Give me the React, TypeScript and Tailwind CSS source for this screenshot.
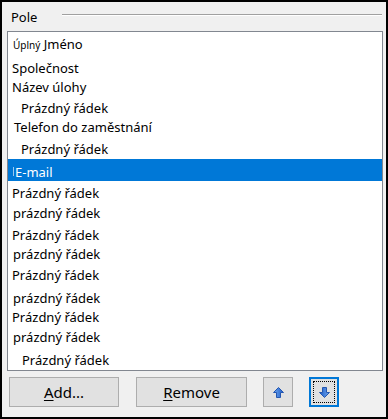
import React from 'react';

type Row = { text: React.ReactNode; h: number; pt: number; pl: number; selected?: boolean };

const rows: Row[] = [
  {
    text: (
      <>
        <span className="text-[10px]">Úplný</span> Jméno
      </>
    ),
    h: 23,
    pt: 5,
    pl: 5,
  },
  { text: 'Společnost', h: 19, pt: 6, pl: 4 },
  { text: 'Název úlohy', h: 21, pt: 6, pl: 4 },
  { text: 'Prázdný řádek', h: 19, pt: 6, pl: 13 },
  { text: 'Telefon do zaměstnání', h: 22, pt: 6, pl: 6 },
  { text: 'Prázdný řádek', h: 23, pt: 6, pl: 13 },
  { text: 'E-mail', h: 22, pt: 6, pl: 7, selected: true },
  { text: 'Prázdný řádek', h: 19, pt: 5, pl: 4 },
  { text: 'prázdný řádek', h: 22, pt: 6, pl: 5 },
  { text: 'Prázdný řádek', h: 19, pt: 6, pl: 4 },
  { text: 'prázdný řádek', h: 21, pt: 6, pl: 5 },
  { text: 'Prázdný řádek', h: 23, pt: 6, pl: 4 },
  { text: 'prázdný řádek', h: 19, pt: 6, pl: 5 },
  { text: 'Prázdný řádek', h: 20, pt: 6, pl: 4 },
  { text: 'prázdný řádek', h: 22, pt: 6, pl: 5 },
  { text: 'Prázdný řádek', h: 24, pt: 7, pl: 14 },
];

const Arrow = ({ down }: { down?: boolean }) => (
  <svg width="11" height="11" viewBox="0 0 11 11" className={down ? 'rotate-180' : ''}>
    <defs>
      <linearGradient id={down ? 'ad' : 'au'} x1="0" y1="0" x2="1" y2="0">
        <stop offset="0" stopColor="#6ea6ee" />
        <stop offset="1" stopColor="#1d5cc8" />
      </linearGradient>
    </defs>
    <path
      d="M5.5 0.5 L10.5 5.5 L7.5 5.5 L7.5 10.5 L3.5 10.5 L3.5 5.5 L0.5 5.5 Z"
      fill={`url(#${down ? 'ad' : 'au'})`}
      stroke="#2456b0"
      strokeWidth="1"
      strokeLinejoin="round"
    />
  </svg>
);

export default function App() {
  return (
    <div className="w-[388px] h-[419px] border-2 border-black bg-[#f0f0f0] flex flex-col font-['Noto_Sans',sans-serif] text-[13px] leading-[15px] text-black">
      <div className="h-[29px] flex items-start shrink-0">
        <span className="ml-[9px] mt-[8px]">Pole</span>
        <div className="ml-auto mr-[4px] mt-[12px] w-[320px] border-t border-t-[#a0a0a0] border-b border-b-white" />
      </div>

      <div className="ml-[5px] mr-[3px] h-[340px] border border-[#828790] bg-white overflow-hidden shrink-0">
        {rows.map((r, i) => (
          <div
            key={i}
            className={`relative whitespace-nowrap ${r.selected ? 'bg-[#0078d7] text-white' : ''}`}
            style={{ height: r.h, paddingTop: r.pt, paddingLeft: r.pl }}
          >
            {r.selected && <span className="absolute left-[5px] top-[8px] w-px h-[9px] bg-[#9cc7ee]" />}
            {r.text}
          </div>
        ))}
      </div>

      <div className="flex items-start mt-[6px] ml-[7px] text-[15px] leading-[18px]">
        <button className="w-[110px] h-[30px] bg-[#e1e1e1] border border-[#adadad] flex items-center justify-center">
          <span>
            <span className="underline underline-offset-2">A</span>dd...
          </span>
        </button>
        <button className="ml-[17px] w-[111px] h-[30px] bg-[#e1e1e1] border border-[#adadad] flex items-center justify-center">
          <span>
            <span className="underline underline-offset-2">R</span>emove
          </span>
        </button>
        <button className="ml-[16px] w-[30px] h-[30px] bg-[#e1e1e1] border border-[#adadad] flex items-center justify-center">
          <Arrow />
        </button>
        <button className="ml-[16px] w-[30px] h-[30px] bg-[#e1e1e1] border-2 border-[#0078d7] flex items-center justify-center p-[2px]">
          <div className="w-full h-full border border-dotted border-black flex items-center justify-center">
            <Arrow down />
          </div>
        </button>
      </div>
    </div>
  );
}
